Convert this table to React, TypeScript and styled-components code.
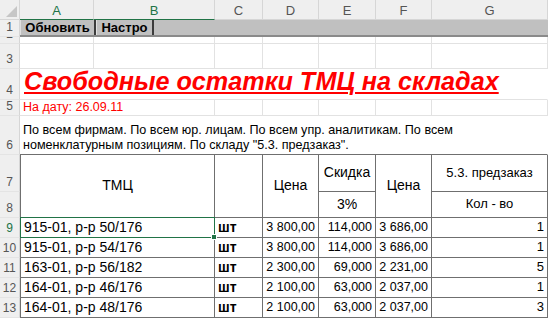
import React from "react";
import styled, { createGlobalStyle, css } from "styled-components";

const GlobalStyle = createGlobalStyle`
  html, body {
    margin: 0;
    padding: 0;
    background: #fff;
    overflow: hidden;
  }
`;

const GRID = "#e2e2e2";
const LINE = "#6f6f6f";
const GREEN = "#217346";

const Sheet = styled.div`
  display: grid;
  grid-template-columns: 20px 74px 121px 48px 56px 57px 56px 116px;
  grid-template-rows: 20px 17px 7px 25px 31px 16px 39px 37px 26px repeat(5, 20px) 20px;
  width: 548px;
  height: 319px;
  overflow: hidden;
  background: #fff;
  font-family: "Liberation Sans", Arial, sans-serif;
  color: #000;
`;

const Corner = styled.div`
  position: relative;
  background: #efefef;
  border-right: 1px solid #d6d6d6;
  border-bottom: 1px solid #d6d6d6;

  svg {
    position: absolute;
    right: 2px;
    bottom: 2px;
  }
`;

const ColHead = styled.div<{ $active?: boolean }>`
  display: flex;
  align-items: center;
  justify-content: center;
  background: #efefef;
  border-right: 1px solid #d6d6d6;
  border-bottom: 1px solid ${({ $active }) => ($active ? GREEN : "#d6d6d6")};
  color: ${({ $active }) => ($active ? GREEN : "#555")};
  font-size: 13px;
  padding-top: 2px;
  box-sizing: border-box;
`;

const RowHead = styled.div<{ $active?: boolean }>`
  display: flex;
  align-items: flex-end;
  justify-content: center;
  overflow: hidden;
  background: #efefef;
  border-right: 1px solid #d6d6d6;
  border-bottom: 1px solid #e4e4e4;
  color: ${({ $active }) => ($active ? GREEN : "#555")};
  font-size: 12px;
  line-height: 14px;
  padding-bottom: 2px;
  box-sizing: border-box;
`;

const Toolbar = styled.div`
  grid-column: 2 / -1;
  display: flex;
  background: #c0c0c0;
  border-bottom: 2px solid #8a8a8a;
  box-sizing: border-box;
`;

const ToolButton = styled.div<{ $width: number }>`
  width: ${({ $width }) => $width}px;
  display: flex;
  align-items: center;
  justify-content: center;
  border-left: 1px solid #e0e0e0;
  border-right: 2px solid #3c3c3c;
  font-size: 13px;
  font-weight: bold;
  box-sizing: border-box;
`;

const Cell = styled.div<{
  $span?: number;
  $rows?: number;
  $align?: "left" | "center" | "right";
  $valign?: "top" | "center" | "bottom";
  $table?: boolean;
  $first?: boolean;
  $size?: number;
  $bold?: boolean;
}>`
  grid-column: span ${({ $span }) => $span || 1};
  grid-row: span ${({ $rows }) => $rows || 1};
  display: flex;
  position: relative;
  white-space: nowrap;
  justify-content: ${({ $align }) =>
    $align === "right" ? "flex-end" : $align === "center" ? "center" : "flex-start"};
  align-items: ${({ $valign }) =>
    $valign === "center" ? "center" : $valign === "top" ? "flex-start" : "flex-end"};
  padding: 0 3px 2px 3px;
  font-size: ${({ $size }) => $size || 12}px;
  font-weight: ${({ $bold }) => ($bold ? "bold" : "normal")};
  box-sizing: border-box;
  border-right: 1px solid ${({ $table }) => ($table ? LINE : GRID)};
  border-bottom: 1px solid ${({ $table }) => ($table ? LINE : GRID)};
  ${({ $first }) =>
    $first &&
    css`
      border-left: 1px solid ${LINE};
    `}
`;

const Title = styled(Cell)`
  color: #ff0000;
  font-style: italic;
  font-weight: bold;
  text-decoration: underline;
  text-decoration-thickness: 2px;
  text-underline-offset: 2px;
  padding-left: 4px;
  padding-bottom: 3px;
  border-right-color: transparent;
`;

const DateLine = styled(Cell)`
  color: #ff0000;
  padding-bottom: 1px;
`;

const Note = styled(Cell)`
  white-space: normal;
  line-height: 15px;
  border-bottom: 1px solid ${LINE};
  border-right-color: transparent;
  padding-bottom: 1px;
`;

const Selected = styled(Cell)`
  &::after {
    content: "";
    position: absolute;
    left: -1px;
    top: -1px;
    right: -1px;
    bottom: -1px;
    border: 1.5px solid ${GREEN};
    pointer-events: none;
  }
  &::before {
    content: "";
    position: absolute;
    right: -3px;
    bottom: -3px;
    width: 4px;
    height: 4px;
    background: ${GREEN};
    border: 1px solid #fff;
    z-index: 2;
  }
`;

const columns = ["A", "B", "C", "D", "E", "F", "G"];

const rows = [
  ["915-01, р-р 50/176", "шт", "3 800,00", "114,000", "3 686,00", "1"],
  ["915-01, р-р 54/176", "шт", "3 800,00", "114,000", "3 686,00", "1"],
  ["163-01, р-р 56/182", "шт", "2 300,00", "69,000", "2 231,00", "5"],
  ["164-01, р-р 46/176", "шт", "2 100,00", "63,000", "2 037,00", "1"],
  ["164-01, р-р 48/176", "шт", "2 100,00", "63,000", "2 037,00", "3"],
];

const App: React.FC = () => {
  return (
    <>
      <GlobalStyle />
      <Sheet>
        <Corner>
          <svg width="11" height="11" viewBox="0 0 11 11">
            <polygon points="11,0 11,11 0,11" fill="#c6c6c6" />
          </svg>
        </Corner>
        {columns.map((c) => (
          <ColHead key={c} $active={c === "A" || c === "B"}>
            {c}
          </ColHead>
        ))}

        {/* 1 */}
        <RowHead>1</RowHead>
        <Toolbar>
          <ToolButton $width={76}>Обновить</ToolButton>
          <ToolButton $width={58}>Настро</ToolButton>
        </Toolbar>

        {/* 2 */}
        <RowHead>2</RowHead>
        {columns.map((c) => (
          <Cell key={c} />
        ))}

        {/* 3 */}
        <RowHead>3</RowHead>
        {columns.map((c) => (
          <Cell key={c} />
        ))}

        {/* 4 */}
        <RowHead>4</RowHead>
        <Title $span={7} $size={25.2}>
          Свободные остатки ТМЦ на складах
        </Title>

        {/* 5 */}
        <RowHead>5</RowHead>
        <DateLine $span={2} $size={12.5}>
          На дату: 26.09.11
        </DateLine>
        <Cell />
        <Cell />
        <Cell />
        <Cell />
        <Cell />

        {/* 6 */}
        <RowHead>6</RowHead>
        <Note $span={7} $size={12.6}>
          По всем фирмам. По всем юр. лицам. По всем упр. аналитикам. По всем
          номенклатурным позициям. По складу "5.3. предзаказ".
        </Note>

        {/* 7-8 */}
        <RowHead>7</RowHead>
        <Cell $table $first $span={2} $rows={2} $align="center" $valign="center" $size={14}>
          ТМЦ
        </Cell>
        <Cell $table $rows={2} />
        <Cell $table $rows={2} $align="center" $valign="center" $size={14}>
          Цена
        </Cell>
        <Cell $table $align="center" $valign="center" $size={14}>
          Скидка
        </Cell>
        <Cell $table $rows={2} $align="center" $valign="center" $size={14}>
          Цена
        </Cell>
        <Cell $table $align="center" $valign="center" $size={13}>
          5.3. предзаказ
        </Cell>
        <RowHead>8</RowHead>
        <Cell $table $align="center" $valign="center" $size={14}>
          3%
        </Cell>
        <Cell $table $align="center" $valign="center" $size={13}>
          Кол - во
        </Cell>

        {rows.map((r, i) => {
          const Name = i === 0 ? Selected : Cell;
          return (
            <React.Fragment key={i}>
              <RowHead $active={i === 0}>{9 + i}</RowHead>
              <Name $table $first $span={2} $valign="center" $size={14}>
                {r[0]}
              </Name>
              <Cell $table $valign="center" $size={14} $bold>
                {r[1]}
              </Cell>
              <Cell $table $align="right" $valign="center" $size={12.5}>
                {r[2]}
              </Cell>
              <Cell $table $align="right" $valign="center" $size={12.5}>
                {r[3]}
              </Cell>
              <Cell $table $align="right" $valign="center" $size={12.5}>
                {r[4]}
              </Cell>
              <Cell $table $align="right" $valign="center" $size={13}>
                {r[5]}
              </Cell>
            </React.Fragment>
          );
        })}
      </Sheet>
    </>
  );
};

export default App;
